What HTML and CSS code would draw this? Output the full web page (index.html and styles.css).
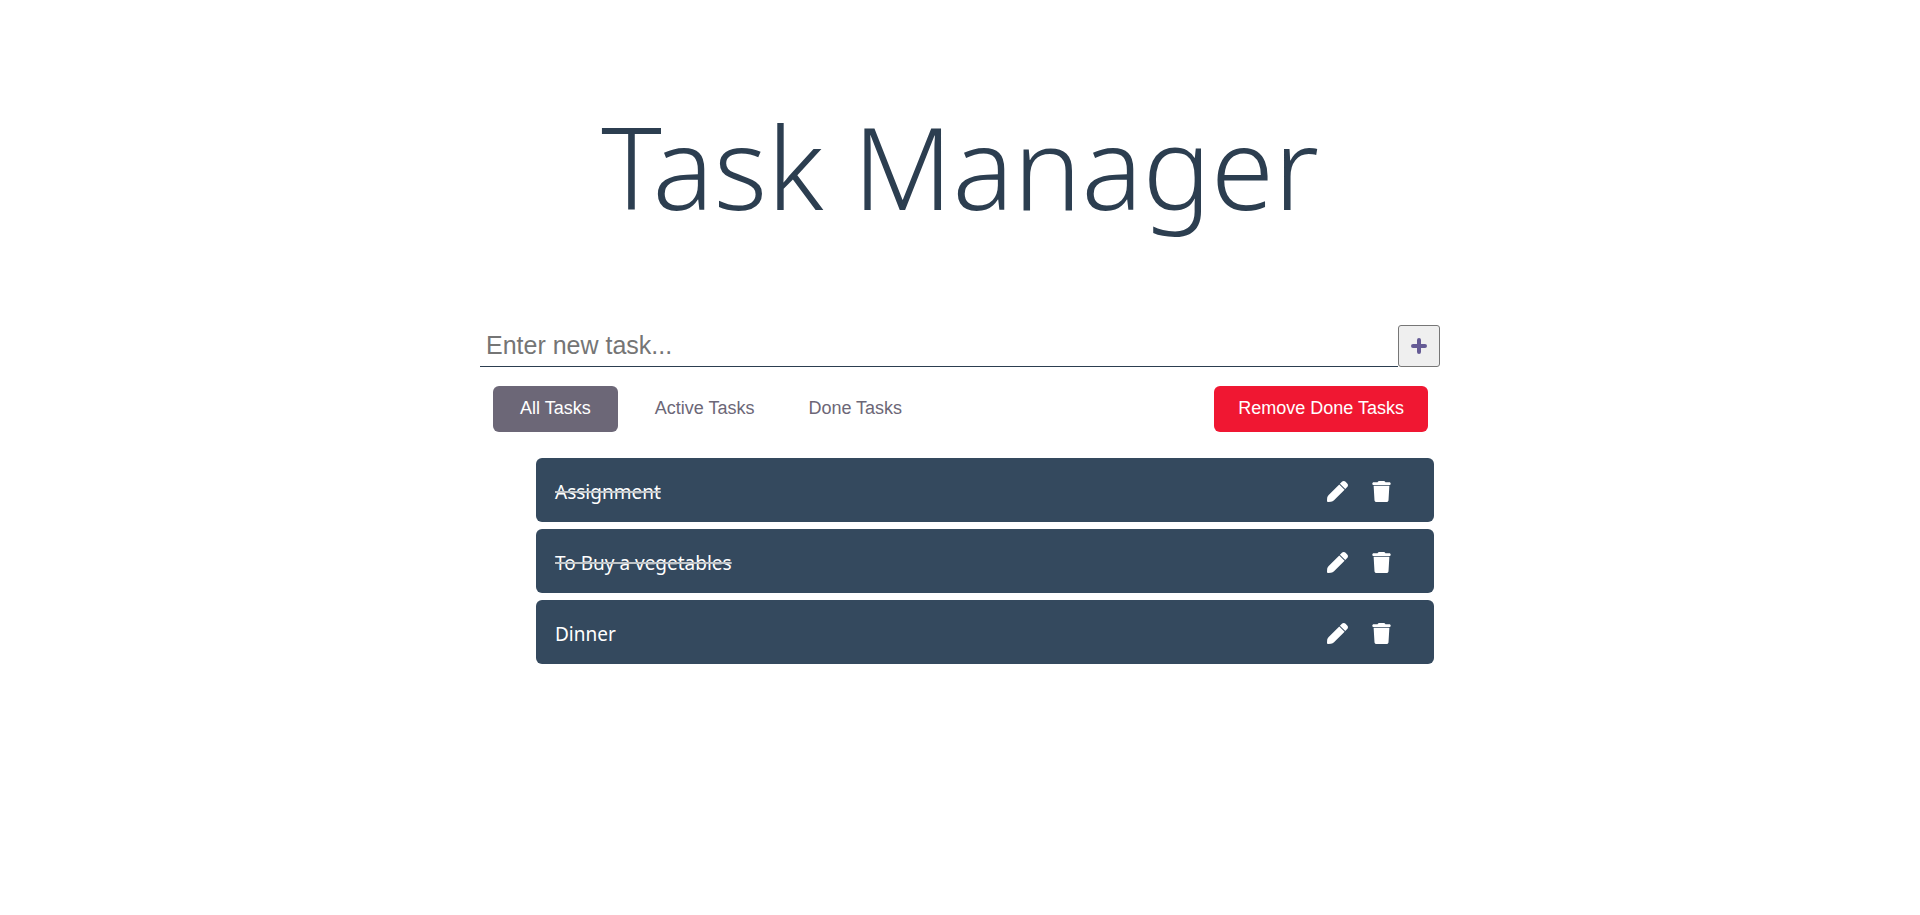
FILE: index.html
```html
<!DOCTYPE html>
<html lang="en">
<head>
<meta charset="utf-8">
<meta name="viewport" content="width=device-width, initial-scale=1">
<title>Task Manager</title>
<link rel="stylesheet" href="styles.css">
</head>
<body>
<svg class="sprite" aria-hidden="true">
  <symbol id="pen" viewBox="0 0 512 512"><path d="M362.7 19.3 314.300 67.700 444.300 197.700 492.700 149.300c25-25 25-65.500 0-90.500L453.300 19.300c-25-25-65.500-25-90.500 0zM299 83 41.100 341C20 362 6 385 4 415L0 480C0 500 12 512 32 512L97 508C127 506 150 492 171 471L429 213z"/></symbol>
  <symbol id="trash" viewBox="0 0 448 512"><path d="M135.200 17.700C140.600 6.800 151.700 0 163.800 0h120.400c12.100 0 23.200 6.800 28.600 17.700L320 32h96c17.700 0 32 14.300 32 32s-14.300 32-32 32H32C14.300 96 0 81.700 0 64s14.300-32 32-32h96zM32 116h384l-21.200 351c-1.600 25.300-22.600 45-47.900 45H101.100c-25.300 0-46.300-19.700-47.900-45z"/></symbol>
  <symbol id="plus" viewBox="0 0 16 16"><path d="M8 2v12M2 8h12" fill="none" stroke="currentColor" stroke-width="4" stroke-linecap="round"/></symbol>
</svg>
<main class="app">
  <h1 class="title">Task Manager</h1>
  <form class="entry">
    <input class="entry-input" type="text" placeholder="Enter new task..." aria-label="New task">
    <button class="entry-add" type="button" aria-label="Add task"><svg class="icon-plus"><use href="#plus"/></svg></button>
  </form>
  <div class="toolbar">
    <button class="filter filter-active" type="button">All Tasks</button>
    <button class="filter" type="button">Active Tasks</button>
    <button class="filter" type="button">Done Tasks</button>
    <button class="remove" type="button">Remove Done Tasks</button>
  </div>
  <ul class="tasks">
    <li class="task">
      <span class="task-name"><s class="done">Assignment</s></span>
      <button class="action" type="button" aria-label="Edit Assignment"><svg class="icon"><use href="#pen"/></svg></button>
      <button class="action" type="button" aria-label="Delete Assignment"><svg class="icon"><use href="#trash"/></svg></button>
    </li>
    <li class="task">
      <span class="task-name"><s class="done">To Buy a vegetables</s></span>
      <button class="action" type="button" aria-label="Edit To Buy a vegetables"><svg class="icon"><use href="#pen"/></svg></button>
      <button class="action" type="button" aria-label="Delete To Buy a vegetables"><svg class="icon"><use href="#trash"/></svg></button>
    </li>
    <li class="task">
      <span class="task-name">Dinner</span>
      <button class="action" type="button" aria-label="Edit Dinner"><svg class="icon"><use href="#pen"/></svg></button>
      <button class="action" type="button" aria-label="Delete Dinner"><svg class="icon"><use href="#trash"/></svg></button>
    </li>
  </ul>
</main>
</body>
</html>
```
FILE: styles.css
```css
* { box-sizing: border-box; }
body {
  margin: 0;
  background: #fff;
  color: #2c3e50;
  font-family: "Segoe UI", "Noto Sans", "Open Sans", sans-serif;
}
.sprite { display: none; }
.app {
  width: 50%;
  margin: 0 auto;
  padding-top: 80px;
}
.title {
  margin: 0 0 73px;
  font-size: 114px;
  font-weight: 300;
  line-height: 172px;
  text-align: center;
  white-space: nowrap;
}
.entry { display: flex; height: 42px; }
.entry-input {
  flex: 1;
  min-width: 0;
  padding: 0 6px;
  border: 0;
  border-bottom: 1px solid #2c3e50;
  background: none;
  font: 25px "Liberation Sans", Arial, sans-serif;
}
.entry-input::placeholder { color: #757575; }
.entry-add {
  display: grid;
  place-items: center;
  width: 42px;
  padding: 0;
  border: 1px solid #767676;
  border-radius: 3px;
  background: #efefef;
  color: #655b95;
}
.icon-plus { width: 16px; height: 16px; }
.toolbar { display: flex; padding: 19px 12px 0 13px; }
.filter, .remove {
  height: 46px;
  padding: 0 27px 2px;
  border: 0;
  border-radius: 6px;
  background: none;
  color: #6c6777;
  font: 18px "Liberation Sans", Arial, sans-serif;
  white-space: nowrap;
}
.filter-active { margin-right: 10px; background: #6c6777; color: #fff; }
.remove { margin-left: auto; padding: 0 24px 2px; background: #f01732; color: #fff; }
.tasks {
  display: grid;
  gap: 7px;
  margin: 26px 6px 0 56px;
  padding: 0;
  list-style: none;
}
.task {
  display: flex;
  align-items: center;
  height: 64px;
  padding: 0 42px 0 19px;
  border-radius: 6px;
  background: #34495e;
  color: #fff;
}
.task-name { flex: 1; padding-top: 3px; font-size: 19px; line-height: 28px; }
.done { text-decoration: line-through 2px #bdc3c7; }
.action {
  display: grid;
  width: 21px;
  margin-left: 23px;
  padding: 2px 0 0;
  border: 0;
  background: none;
  color: #fff;
}
.icon { width: 21px; height: 21px; fill: currentColor; }
```
